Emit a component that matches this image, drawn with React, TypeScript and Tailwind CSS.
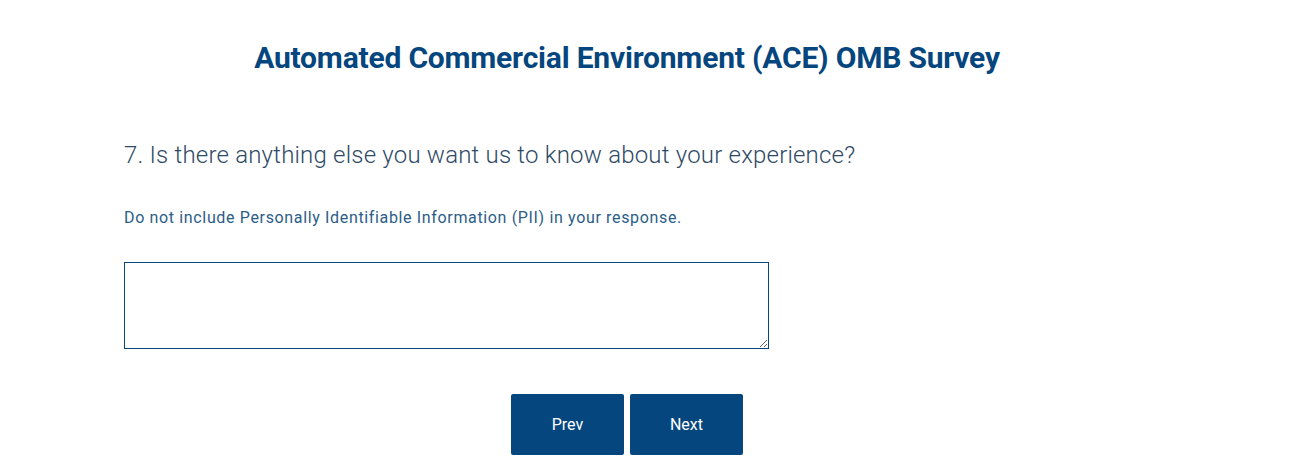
import React from "react";

export default function App() {
  return (
    <div className="w-[1301px] h-[465px] bg-white overflow-hidden" style={{ fontFamily: "Roboto, 'Noto Sans', sans-serif" }}>
      <div className="w-[1254px]">
        <div className="flex justify-center pt-[40px]">
          <h1 className="text-[30px] leading-[36px] font-bold text-[#05467e] tracking-[-0.2px]">
            Automated Commercial Environment (ACE) OMB Survey
          </h1>
        </div>
        <div className="pl-[124px] pt-[63px]">
          <div className="text-[24px] leading-[32px] font-light text-[#2f4a66] tracking-[0.2px]">
            7. Is there anything else you want us to know about your experience?
          </div>
          <div className="mt-[37px] text-[16px] leading-[20px] text-[#2b5d87] tracking-[0.65px]">
            Do not include Personally Identifiable Information (PII) in your response.
          </div>
          <textarea className="mt-[34px] block w-[645px] h-[87px] border border-[#05467e] bg-white outline-none" />
        </div>
        <div className="flex justify-center gap-[6px] mt-[45px]">
          <button className="w-[113px] h-[61px] rounded-[2px] bg-[#05467e] text-white text-[16px] font-normal">Prev</button>
          <button className="w-[113px] h-[61px] rounded-[2px] bg-[#05467e] text-white text-[16px] font-normal">Next</button>
        </div>
      </div>
    </div>
  );
}
